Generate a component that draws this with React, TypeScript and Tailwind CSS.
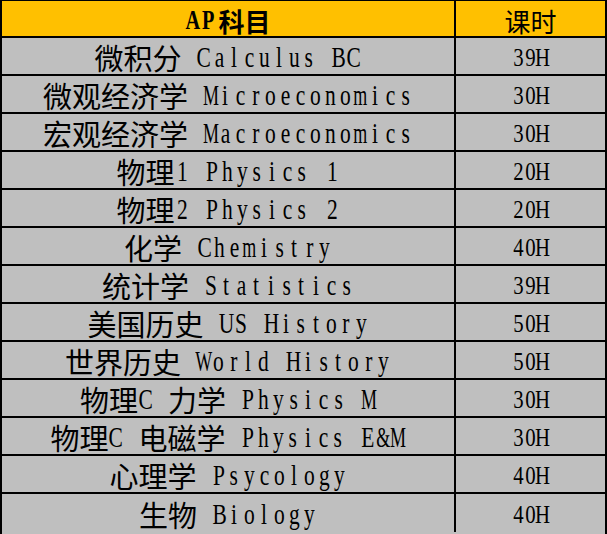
import React from "react";

const rows: [string, string][] = [
  ["微积分 Calculus BC", "39H"],
  ["微观经济学 Microeconomics", "30H"],
  ["宏观经济学 Macroeconomics", "30H"],
  ["物理1 Physics 1", "20H"],
  ["物理2 Physics 2", "20H"],
  ["化学 Chemistry", "40H"],
  ["统计学 Statistics", "39H"],
  ["美国历史 US History", "50H"],
  ["世界历史 World History", "50H"],
  ["物理C 力学 Physics M", "30H"],
  ["物理C 电磁学 Physics E&M", "30H"],
  ["心理学 Psycology", "40H"],
  ["生物 Biology", "40H"],
];

// latin text in the sheet is half-width fixed cells with narrow serif glyphs
function Mono({ text, cell, glyph, wide }: { text: string; cell: string; glyph: string; wide?: string }) {
  return (
    <>
      {Array.from(text).map((c, i) => (
        <span key={i} className={cell}>
          <span className={wide && /[MW&m]/.test(c) ? wide : glyph}>{c === " " ? "\u00a0" : c}</span>
        </span>
      ))}
    </>
  );
}

const latinCell = "inline-flex justify-center w-[15px]";
const latinGlyph = "inline-block scale-x-[0.74] font-['Liberation_Serif',serif] text-[29px] leading-none";
const latinWide = "inline-block scale-x-[0.62] font-['Liberation_Serif',serif] text-[29px] leading-none";

// split a label into CJK runs and latin runs so each gets its own font
function Label({ text }: { text: string }) {
  const parts = text.match(/[\u4e00-\u9fff]+|[^\u4e00-\u9fff]+/g) ?? [];
  return (
    <>
      {parts.map((p, i) =>
        /[\u4e00-\u9fff]/.test(p) ? (
          <span key={i} className="font-['Noto_Sans_CJK_SC',sans-serif] text-[29px] leading-none">
            {p}
          </span>
        ) : (
          <Mono key={i} text={p} cell={latinCell} glyph={latinGlyph} wide={latinWide} />
        )
      )}
    </>
  );
}

export default function App() {
  return (
    <div className="w-[607px] h-[534px] bg-[#bfbfbf] border-l-2 border-t border-r-2 border-black text-black overflow-hidden">
      <div className="grid grid-cols-[454px_1fr] h-[37px] bg-[#ffc000] border-b-2 border-black">
        <div className="flex items-center justify-center pt-1 border-r-2 border-black font-bold leading-none">
          <Mono
            text="AP"
            cell="inline-flex justify-center w-[15px]"
            glyph="inline-block scale-x-[0.75] font-['Liberation_Serif',serif] text-[27px] leading-none"
          />
          <span className="font-['Noto_Sans_CJK_SC',sans-serif] text-[26px] ml-[3px]">科目</span>
        </div>
        <div className="flex items-center justify-center pt-1 leading-none font-['Noto_Sans_CJK_SC',sans-serif] text-[26px]">
          课时
        </div>
      </div>
      {rows.map(([name, hours], i) => (
        <div
          key={i}
          className={
            i === rows.length - 1
              ? "grid grid-cols-[454px_1fr] h-[38px]"
              : "grid grid-cols-[454px_1fr] h-[38px] border-b-2 border-black"
          }
        >
          <div className="flex items-center justify-center pt-[3px] border-r-2 border-black leading-none">
            <Label text={name} />
          </div>
          <div className="flex items-center justify-center pt-[3px] leading-none">
            <Mono
              text={hours}
              cell="inline-flex justify-center w-[12px]"
              glyph="inline-block scale-x-[0.8] font-['Liberation_Serif',serif] text-[26px] leading-none"
            />
          </div>
        </div>
      ))}
    </div>
  );
}
